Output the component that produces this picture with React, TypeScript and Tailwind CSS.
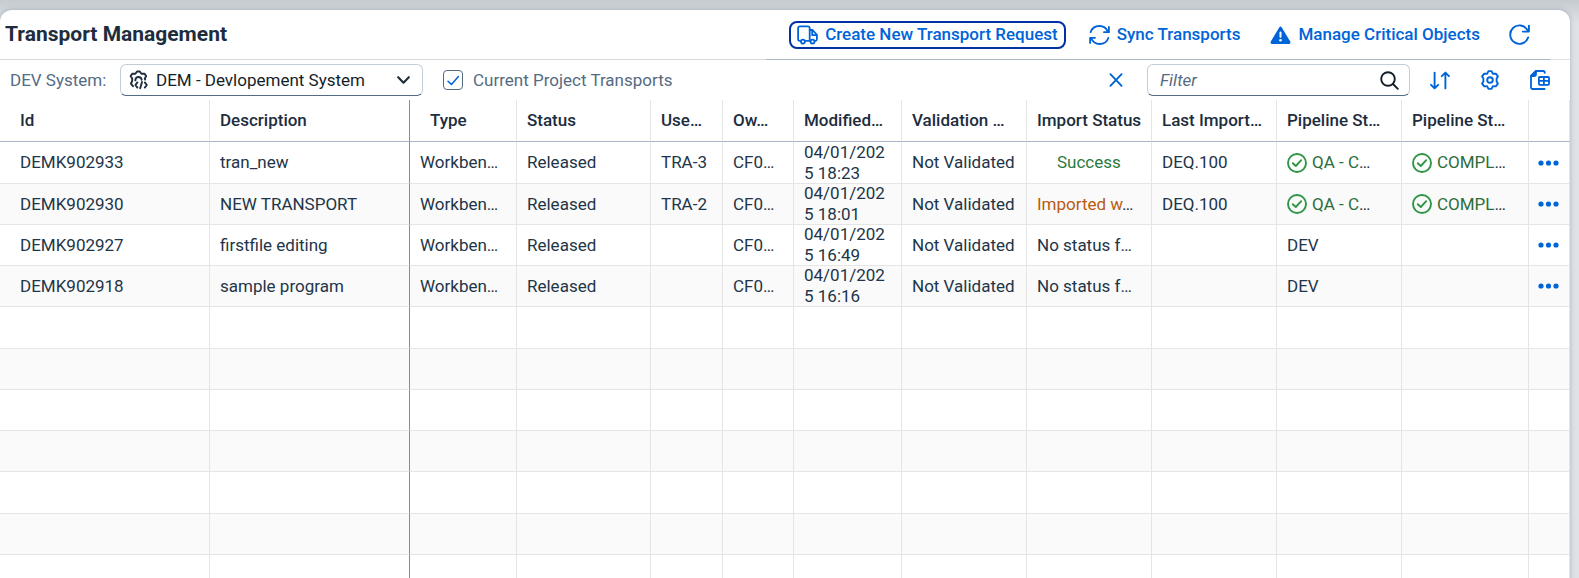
import React, { useState } from "react";

type Transport = {
  id: string;
  description: string;
  request?: string;
  modified: [string, string];
  importStatus: { text: string; tone: string; cut?: boolean; indent?: boolean };
  lastImport?: string;
  pipeline: { text: string; done?: boolean };
  pipelineState?: string;
};

const transports: Transport[] = [
  {
    id: "DEMK902933",
    description: "tran_new",
    request: "TRA-3",
    modified: ["04/01/202", "5 18:23"],
    importStatus: { text: "Success", tone: "text-[#2b7a40]", indent: true },
    lastImport: "DEQ.100",
    pipeline: { text: "QA - C", done: true },
    pipelineState: "COMPL",
  },
  {
    id: "DEMK902930",
    description: "NEW TRANSPORT",
    request: "TRA-2",
    modified: ["04/01/202", "5 18:01"],
    importStatus: { text: "Imported w", tone: "text-[#b85a10]", cut: true },
    lastImport: "DEQ.100",
    pipeline: { text: "QA - C", done: true },
    pipelineState: "COMPL",
  },
  {
    id: "DEMK902927",
    description: "firstfile editing",
    modified: ["04/01/202", "5 16:49"],
    importStatus: { text: "No status f", tone: "text-[#223548]", cut: true },
    pipeline: { text: "DEV" },
  },
  {
    id: "DEMK902918",
    description: "sample program",
    modified: ["04/01/202", "5 16:16"],
    importStatus: { text: "No status f", tone: "text-[#223548]", cut: true },
    pipeline: { text: "DEV" },
  },
];

const columns = [
  { label: "Id", width: "w-[210px]", pad: "pl-5" },
  { label: "Description", width: "w-[200px]", pad: "pl-2.5" },
  { label: "Type", width: "w-[107px]", pad: "pl-5" },
  { label: "Status", width: "w-[134px]", pad: "pl-2.5" },
  { label: "Use…", width: "w-[72px]", pad: "pl-2.5" },
  { label: "Ow…", width: "w-[71px]", pad: "pl-2.5" },
  { label: "Modified…", width: "w-[108px]", pad: "pl-2.5" },
  { label: "Validation …", width: "w-[125px]", pad: "pl-2.5" },
  { label: "Import Status", width: "w-[125px]", pad: "pl-2.5" },
  { label: "Last Import…", width: "w-[125px]", pad: "pl-2.5" },
  { label: "Pipeline St…", width: "w-[125px]", pad: "pl-2.5" },
  { label: "Pipeline St…", width: "w-[127px]", pad: "pl-2.5" },
  { label: "", width: "w-[41px]", pad: "" },
];

const emptyRows = [0, 1, 2, 3, 4, 5, 6];

function TruckIcon() {
  return (
    <svg className="h-5 w-[21px] shrink-0" viewBox="0 0 21 20" fill="none" stroke="currentColor" strokeWidth="1.8" strokeLinejoin="round" strokeLinecap="round" aria-hidden="true">
      <path d="M3.2 15.8H2.8A1.7 1.7 0 0 1 1.1 14.1V3.1A1.7 1.7 0 0 1 2.8 1.4H11A1.7 1.7 0 0 1 12.7 3.1V15.8H8.6" />
      <path d="M12.7 5H15.6L19.9 9.8V14.2A1.6 1.6 0 0 1 18.4 15.8" />
      <path d="M15.2 5.4V10.2H19.6" />
      <circle cx="5.9" cy="16.6" r="2" />
      <circle cx="15.5" cy="16.6" r="2" />
    </svg>
  );
}

function SyncIcon() {
  return (
    <svg className="h-5 w-[21px] shrink-0" viewBox="0 0 21 20" fill="none" stroke="currentColor" strokeWidth="1.8" strokeLinecap="round" strokeLinejoin="round" aria-hidden="true">
      <path d="M1.6 7.2C2.8 3.4 6.2 1 10.4 1C14.6 1 17.4 3.2 18.8 6.6" />
      <path d="M19.9 2V7.2H15" />
      <path d="M19.4 12.8C18.2 16.6 14.8 19 10.6 19C6.4 19 3.6 16.8 2.2 13.4" />
      <path d="M1.1 18V12.8H6" />
    </svg>
  );
}

function AlertIcon() {
  return (
    <svg className="h-5 w-[21px] shrink-0" viewBox="0 0 21 20" aria-hidden="true">
      <path d="M9.2 2.5Q10.5 0.6 11.8 2.5L20.2 16.6Q21 18.8 18.8 19H2.2Q0 18.8 0.8 16.6Z" fill="currentColor" />
      <path d="M10.5 7.4V11.8" stroke="white" strokeWidth="2" strokeLinecap="round" />
      <circle cx="10.5" cy="15.2" r="1.3" fill="white" />
    </svg>
  );
}

function RefreshIcon() {
  return (
    <svg className="h-[21px] w-[21px]" viewBox="0 0 21 21" fill="none" stroke="currentColor" strokeWidth="1.9" strokeLinecap="round" strokeLinejoin="round" aria-hidden="true">
      <path d="M19.2 13.4A9.2 9.2 0 1 1 18.4 6" />
      <path d="M19.9 1.6V7.6H13.8" />
    </svg>
  );
}

function SystemIcon() {
  return (
    <svg className="h-5 w-5 shrink-0 text-[#1d2d3e]" viewBox="0 0 20 20" fill="none" stroke="currentColor" strokeWidth="1.9" strokeLinecap="round" strokeLinejoin="round" aria-hidden="true">
      <path d="M4 16.2L1.9 13.6L3.2 11V8.6L1.6 6L3.4 3.6L6.4 3.7L8 1.5H10.8L12.4 3.7L15.4 3.6L17.2 6L15.8 8.4L16.2 9.6" />
      <path d="M6.4 10.4V9.6A3.2 3.2 0 0 1 12.6 9.2V9.8" />
      <path d="M8.4 12.4L6.4 15L8.4 17.6" />
      <path d="M13 12L11.2 18.2" />
      <path d="M15.8 12.4L17.8 15L15.8 17.6" />
    </svg>
  );
}

function ChevronIcon() {
  return (
    <svg className="pointer-events-none h-2 w-[13px] shrink-0 text-[#1d2d3e]" viewBox="0 0 13 8" fill="none" stroke="currentColor" strokeWidth="2.1" strokeLinecap="round" strokeLinejoin="round" aria-hidden="true">
      <path d="M1.2 1.2L6.5 6.7L11.8 1.2" />
    </svg>
  );
}

function CloseIcon() {
  return (
    <svg className="h-3.5 w-3.5" viewBox="0 0 14 14" fill="none" stroke="currentColor" strokeWidth="1.9" strokeLinecap="round" aria-hidden="true">
      <path d="M1.4 1.2L12.6 12.8M12.6 1.2L1.4 12.8" />
    </svg>
  );
}

function SearchIcon() {
  return (
    <svg className="h-[19px] w-[19px]" viewBox="0 0 19 19" fill="none" stroke="currentColor" strokeWidth="1.9" strokeLinecap="round" aria-hidden="true">
      <circle cx="8" cy="8" r="6.8" />
      <path d="M13 13L17.8 17.8" />
    </svg>
  );
}

function SortIcon() {
  return (
    <svg className="h-[19px] w-5" viewBox="0 0 20 19" fill="none" stroke="currentColor" strokeWidth="1.9" strokeLinecap="round" strokeLinejoin="round" aria-hidden="true">
      <path d="M4.6 1.6V17M1 13.8L4.6 17.4L8.2 13.8" />
      <path d="M15.4 17.4V2M11.8 5.2L15.4 1.6L19 5.2" />
    </svg>
  );
}

function GearIcon() {
  return (
    <svg className="h-5 w-5" viewBox="0 0 20 20" fill="none" stroke="currentColor" strokeWidth="1.9" strokeLinejoin="round" aria-hidden="true">
      <path d="M8.5 1.1H11.5L12.8 3.7L15.8 3.6L17.9 6.4L16.6 8.6V11.4L17.9 13.6L15.8 16.4L12.8 16.3L11.5 18.9H8.5L7.2 16.3L4.2 16.4L2.1 13.6L3.4 11.4V8.6L2.1 6.4L4.2 3.6L7.2 3.7Z" />
      <circle cx="10" cy="10" r="2.8" />
    </svg>
  );
}

function ExportIcon() {
  return (
    <svg className="h-5 w-5" viewBox="0 0 20 20" fill="none" stroke="currentColor" strokeWidth="1.8" strokeLinecap="round" strokeLinejoin="round" aria-hidden="true">
      <path d="M14.6 19H2.4A1.4 1.4 0 0 1 1 17.6V6L6 1H13A1.8 1.8 0 0 1 14.8 2.8" />
      <path d="M1 6L6 1V4.6A1.4 1.4 0 0 1 4.6 6Z" fill="currentColor" />
      <rect x="8.9" y="7" width="10.1" height="7.9" rx="0.8" />
      <path d="M13.9 7V14.9M8.9 10.9H19" />
    </svg>
  );
}

function DoneIcon() {
  return (
    <svg className="h-5 w-5 shrink-0 text-[#2f9547]" viewBox="0 0 20 20" fill="none" stroke="currentColor" strokeWidth="1.9" strokeLinecap="round" strokeLinejoin="round" aria-hidden="true">
      <circle cx="10" cy="10" r="9" />
      <path d="M5.8 10.2L8.8 13L14.2 7.2" />
    </svg>
  );
}

function DotsIcon() {
  return (
    <svg className="h-1.5 w-[21px]" viewBox="0 0 21 6" fill="currentColor" aria-hidden="true">
      <circle cx="3" cy="3" r="2.6" />
      <circle cx="10.5" cy="3" r="2.6" />
      <circle cx="18" cy="3" r="2.6" />
    </svg>
  );
}

function DoneLabel({ text }: { text: string }) {
  return (
    <span className="flex items-center gap-[5px]">
      <DoneIcon />
      <span>
        <span className="text-[#2b6e3b]">{text}</span>…
      </span>
    </span>
  );
}

const cell = "truncate border-r border-b border-[#e5e5e5] p-0 pl-2.5";
const pinned = "truncate border-r border-b border-r-[#8c8c8c] border-b-[#e5e5e5] p-0 pl-2.5";
const row = "h-[41px] even:bg-[#fafafa] [&:nth-child(4n+1)]:h-[42px]";

export default function App() {
  const [filter, setFilter] = useState("");
  const [mine, setMine] = useState(true);

  return (
    <main className="h-screen overflow-hidden bg-linear-to-b from-[#c6cbd1] to-[#dfe3e7] to-[24px] pt-2.5 pr-[9px] font-['Roboto','Open_Sans',sans-serif] text-[17px] leading-[21px] text-[#223548]">
      <section className="min-h-full rounded-t-xl bg-white shadow-[0_0_5px_rgba(85,107,130,0.4)]">
        <header className="flex h-[50px] items-stretch">
          <h1 className="flex grow items-center border-b border-[#d9d9d9] pl-[5px] text-[21px] font-bold text-[#1d2d3e]">
            Transport Management
          </h1>
          <div className="flex items-center gap-4 border-b border-[#a8b5c4] pl-[23px] font-medium text-[#0064d9]">
            <button className="flex h-7 items-center gap-[7px] rounded-lg border-2 border-[#0032a5] px-1.5">
              <TruckIcon />
              Create New Transport Request
            </button>
            <button className="flex h-7 items-center gap-[7px] px-[7px]">
              <SyncIcon />
              Sync Transports
            </button>
            <button className="flex h-7 items-center gap-[7px] px-[7px]">
              <AlertIcon />
              Manage Critical Objects
            </button>
            <button aria-label="Refresh" className="flex h-7 items-center pr-5 pl-1.5">
              <RefreshIcon />
            </button>
          </div>
          <div className="w-5 border-b border-[#e0e0e0]" />
        </header>

        <div className="flex h-10 items-center pr-5 pl-2.5">
          <label htmlFor="system" className="w-[110px] text-[#556b82]">
            DEV System:
          </label>
          <div className="flex h-8 w-[303px] items-center gap-[7px] rounded-md border border-[#c3cdd8] border-b-[#556b82] pr-3 pl-2">
            <SystemIcon />
            <select id="system" className="min-w-0 grow appearance-none bg-transparent text-[#131e29] outline-none">
              <option>DEM - Devlopement System</option>
            </select>
            <ChevronIcon />
          </div>
          <label className="ml-5 flex items-center gap-2.5 text-[#556b82]">
            <span className="relative flex h-5 w-5">
              <input
                type="checkbox"
                checked={mine}
                onChange={(e) => setMine(e.target.checked)}
                className="peer h-5 w-5 appearance-none rounded border border-[#556b82] bg-white"
              />
              <svg className="pointer-events-none absolute inset-0 hidden h-5 w-5 text-[#0064d9] peer-checked:block" viewBox="0 0 20 20" fill="none" stroke="currentColor" strokeWidth="1.5" strokeLinecap="round" strokeLinejoin="round" aria-hidden="true">
                <path d="M5 11.2L8.4 14.4L15.4 6.6" />
              </svg>
            </span>
            Current Project Transports
          </label>
          <div className="ml-auto flex items-center text-[#0064d9]">
            <button aria-label="Clear filter" onClick={() => setFilter("")} className="mr-6">
              <CloseIcon />
            </button>
            <div className="flex h-8 w-[263px] items-center rounded-md border border-[#c3cdd8] border-b-[#556b82] pr-2.5 pl-3">
              <input
                aria-label="Filter"
                placeholder="Filter"
                value={filter}
                onChange={(e) => setFilter(e.target.value)}
                className="min-w-0 grow bg-transparent text-[#131e29] outline-none placeholder:text-[#556b82] placeholder:italic"
              />
              <button aria-label="Search" className="text-[#131e29]">
                <SearchIcon />
              </button>
            </div>
            <div className="ml-5 flex items-center gap-[30px]">
              <button aria-label="Sort">
                <SortIcon />
              </button>
              <button aria-label="Settings">
                <GearIcon />
              </button>
              <button aria-label="Export to spreadsheet">
                <ExportIcon />
              </button>
            </div>
          </div>
        </div>

        <table className="w-full table-fixed border-separate border-spacing-0 text-left">
          <colgroup>
            {columns.map((c, i) => (
              <col key={i} className={c.width} />
            ))}
          </colgroup>
          <thead>
            <tr className="h-[42px]">
              {columns.map((c, i) => (
                <th
                  key={i}
                  scope="col"
                  className={`whitespace-nowrap border-r border-b border-b-[#a8b5c4] p-0 pb-px font-medium text-[#1d2d3e] ${i === 1 ? "border-r-[#8c8c8c]" : "border-r-[#e5e5e5]"} ${c.pad}`}
                >
                  {c.label}
                </th>
              ))}
            </tr>
          </thead>
          <tbody>
            {transports.map((t) => (
              <tr key={t.id} className={row}>
                <td className="truncate border-r border-b border-[#e5e5e5] p-0 pl-5">{t.id}</td>
                <td className={pinned}>{t.description}</td>
                <td className={cell}>Workben…</td>
                <td className={cell}>Released</td>
                <td className={cell}>{t.request}</td>
                <td className={cell}>CF0…</td>
                <td className={cell}>
                  <div className="-my-px">
                    {t.modified[0]}
                    <br />
                    {t.modified[1]}
                  </div>
                </td>
                <td className={cell}>Not Validated</td>
                <td className={cell}>
                  <span className={`${t.importStatus.tone} ${t.importStatus.indent ? "pl-5" : ""}`}>{t.importStatus.text}</span>
                  {t.importStatus.cut ? "…" : ""}
                </td>
                <td className={cell}>{t.lastImport}</td>
                <td className={cell}>{t.pipeline.done ? <DoneLabel text={t.pipeline.text} /> : t.pipeline.text}</td>
                <td className={cell}>{t.pipelineState ? <DoneLabel text={t.pipelineState} /> : null}</td>
                <td className="border-r border-b border-[#e5e5e5] p-0">
                  <button aria-label={`Actions for ${t.id}`} className="flex w-full justify-center pr-0.5 text-[#0064d9]">
                    <DotsIcon />
                  </button>
                </td>
              </tr>
            ))}
            {emptyRows.map((r) => (
              <tr key={r} className={row}>
                {columns.map((c, i) => (
                  <td key={i} className={i === 1 ? pinned : cell} />
                ))}
              </tr>
            ))}
          </tbody>
        </table>
      </section>
    </main>
  );
}
